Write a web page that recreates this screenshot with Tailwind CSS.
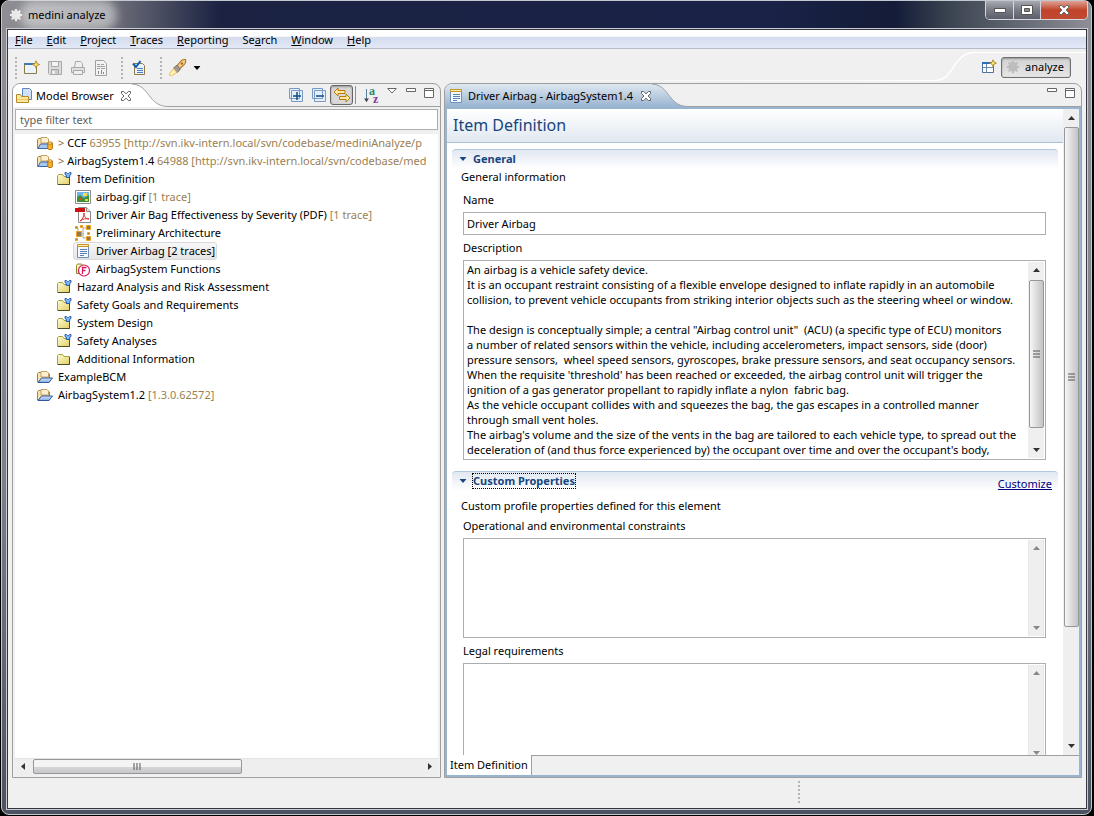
<!DOCTYPE html>
<html lang="en">
  <head>
    <meta charset="UTF-8" />
    <meta name="viewport" content="width=device-width, initial-scale=1.0" />
    <title>medini analyze</title>
    <script src="https://cdn.jsdelivr.net/npm/@tailwindcss/browser@4"></script>
  </head>

  <body
    class="h-screen overflow-hidden bg-black font-['Noto_Sans',sans-serif] text-[11px] leading-4 text-black"
  >
    <!-- shared icons -->
    <svg class="absolute size-0">
      <defs>
        <linearGradient id="yellow" x1="0" y1="0" x2="1" y2="1">
          <stop offset="0" stop-color="#fdfbd0" />
          <stop offset="1" stop-color="#e2cf66" />
        </linearGradient>
        <linearGradient id="blue" x1="0" y1="0" x2="0" y2="1">
          <stop offset="0" stop-color="#d7e8fb" />
          <stop offset="1" stop-color="#7fa9e0" />
        </linearGradient>
        <linearGradient id="tab" x1="0" y1="0" x2="0" y2="1">
          <stop offset="0" stop-color="#dfe8f1" />
          <stop offset="1" stop-color="#99b4d1" />
        </linearGradient>
        <symbol id="gear" viewBox="0 0 16 16">
          <path d="M8 1v14M1 8h14M3 3l10 10M13 3L3 13" stroke="currentColor" stroke-width="2.4" />
          <circle cx="8" cy="8" r="3.9" fill="none" stroke="currentColor" stroke-width="3" />
        </symbol>
        <symbol id="folder" viewBox="0 0 16 16">
          <path d="M1.5 13.5v-9l1-1h4l1.5 2h5.5v8z" fill="url(#yellow)" stroke="#a3a03e" />
          <path d="M2 13.5h11.5V6" fill="none" stroke="#4f4d1c" />
        </symbol>
        <symbol id="folder-model" viewBox="0 0 16 16">
          <path d="M1.5 13.5v-9l1-1h4l1.5 2h5.500v8z" fill="url(#yellow)" stroke="#a3a03e" />
          <path d="M2 13.5h11.5V6" fill="none" stroke="#4f4d1c" />
          <path d="M9 1.500h1.500l1 1h1l1-1H15v2l-1.300.7v2.300h-3.400V4.200L9 3.500z" fill="#7dbcf8" stroke="#1f4ea3" stroke-width=".9" />
        </symbol>
        <symbol id="project" viewBox="0 0 16 16">
          <path d="M.5 13V4.500l1-1h3.500l1 1.500h6.500V13z" fill="#fbe3ad" stroke="#a08348" />
          <path d="M4 2.500h6l1.500 1.500v4H4z" fill="#fdf0d0" stroke="#c3a065" />
          <path d="M1 13.500l3.500-4.500h11l-3.500 4.500z" fill="url(#blue)" stroke="#33579b" />
        </symbol>
        <symbol id="project-svn" viewBox="0 0 16 16">
          <path d="M.5 13.500v-9l1-1h3.500l1 1.500h5.500v8.500z" fill="#fbe3ad" stroke="#a08348" />
          <path d="M4 2.500h6l1.500 1.500v4H4z" fill="#fdf0d0" stroke="#c3a065" />
          <path d="M1 13.500l2.500-4.500h8v4.500z" fill="#a9c8f0" stroke="#3f65a8" />
          <path d="M10.800 8v5.500c0 1.500 4.500 1.500 4.500 0V8z" fill="#f7b530" stroke="#b06a00" />
          <ellipse cx="13" cy="8" rx="2.200" ry="1.200" fill="#ffe9a0" stroke="#b06a00" stroke-width=".8" />
        </symbol>
        <symbol id="form" viewBox="0 0 16 16">
          <path d="M2.500 1.500h11v13h-11z" fill="#f4f9ff" stroke="#6f8fb8" />
          <path d="M2.500 1.500h11v2h-11z" fill="#fdeeb0" stroke="#c9962c" />
          <path d="M5 6.500h7M5 8.500h7M5 10.500h7M5 12.500h4" stroke="#5b80b8" />
        </symbol>
        <symbol id="close-x" viewBox="0 0 12 12">
          <path d="M1.500 1.500h2.200L6 3.900l2.300-2.400h2.200v2L8.100 6l2.400 2.500v2H8.300L6 8.100l-2.300 2.400H1.500v-2L3.900 6 1.500 3.500z" fill="#fff" stroke="#666" />
        </symbol>
        <symbol id="min" viewBox="0 0 12 12">
          <path d="M1.500 1.500h9v3h-9z" fill="#fff" stroke="#666" />
        </symbol>
        <symbol id="max" viewBox="0 0 12 12">
          <path d="M1.500 1.500h9v9h-9z" fill="#fff" stroke="#666" />
          <path d="M1 3.500h10" stroke="#666" />
        </symbol>
        <symbol id="up" viewBox="0 0 7 4"><path d="M0 4l3.500-4L7 4z" /></symbol>
        <symbol id="down" viewBox="0 0 7 4"><path d="M0 0h7L3.500 4z" /></symbol>
      </defs>
    </svg>

    <div
      class="mr-[2px] ml-px flex h-[calc(100vh-1px)] flex-col rounded-lg border border-[#c3c7cf] bg-linear-to-b from-[#8f8f98] via-[#7c7f8a] via-60% to-[#4c5262] pr-[3px] pb-1 pl-1"
    >
      <!-- title bar -->
      <header
        class="-mr-[3px] -ml-1 flex h-[27px] shrink-0 justify-between rounded-t-lg bg-[linear-gradient(90deg,#8e8e94_0%,#77787f_9%,#1b2242_20%,#1a2248_70%,#141c38_82%,#3a4450_87%,#8e8e96_100%)] pr-[3px] pl-[7px]"
      >
        <div class="flex items-center gap-1">
          <svg class="size-[14px] text-[#e8e8e8]"><use href="#gear" /></svg>
          <h1 class="rounded-full bg-white/45 pr-1 pl-px shadow-[0_0_9px_7px_rgba(255,255,255,0.45)]">medini analyze</h1>
        </div>
        <div class="flex h-[19px] overflow-hidden rounded-b-[5px] border border-t-0 border-[#d5d7dc]">
          <button
            aria-label="Minimize"
            class="flex w-7 items-center justify-center border-r border-[#d5d7dc] bg-linear-to-b from-[#a9abb4] via-[#7c7e88] via-45% to-[#5c5f6b]"
          >
            <svg class="h-[5px] w-3"><path d="M.5.5h11v4H.5z" fill="#fff" stroke="#555" /></svg>
          </button>
          <button
            aria-label="Maximize"
            class="flex w-[27px] items-center justify-center border-r border-[#d5d7dc] bg-linear-to-b from-[#a9abb4] via-[#7c7e88] via-45% to-[#5c5f6b]"
          >
            <svg class="h-[10px] w-3">
              <path d="M.5.5h11v9H.5z" fill="#fff" stroke="#555" />
              <path d="M3.500 3.500h5v3h-5z" fill="#888" stroke="#555" />
            </svg>
          </button>
          <button
            aria-label="Close"
            class="flex w-[46px] items-center justify-center bg-linear-to-b from-[#dda295] via-[#c0432a] via-50% to-[#c04a32]"
          >
            <svg class="size-3"><use href="#close-x" /></svg>
          </button>
        </div>
      </header>

      <div class="flex min-h-0 flex-1 border border-[#c9ccd3]">
        <div class="flex min-w-0 flex-1 flex-col border border-[#33363f] bg-[#f0f0f0]">
          <!-- menu bar -->
          <nav
            class="flex h-[19px] shrink-0 items-center border-b border-[#b6bccc] bg-linear-to-b from-white from-35% via-[#d5dcee] via-40% to-[#e2e8f6] pt-px"
          >
            <button class="px-[7px]"><u>F</u>ile</button>
            <button class="px-[7px]"><u>E</u>dit</button>
            <button class="px-[7px]"><u>P</u>roject</button>
            <button class="px-[7px]"><u>T</u>races</button>
            <button class="px-[7px]"><u>R</u>eporting</button>
            <button class="px-[7px]">Se<u>a</u>rch</button>
            <button class="px-[7px]"><u>W</u>indow</button>
            <button class="px-[7px]"><u>H</u>elp</button>
          </nav>

          <!-- toolbar -->
          <div class="flex h-[34px] shrink-0">
            <div class="flex flex-1 flex-col">
              <div class="flex h-[31px] items-center gap-[7px] pt-[6px] pl-[7px]">
                <span class="h-[22px] border-l-2 border-dotted border-[#b4b4b4]"></span>
                <button aria-label="New">
                  <svg class="size-4">
                    <path d="M.5 3.500h12v10H.5z" fill="#eaf4fd" stroke="#8a7a45" />
                    <path d="M.5 3.500h8v1h-8z" fill="#4d87c7" stroke="#3f78b5" />
                    <path d="M12 .8l1 2.700 2.700 1-2.700 1-1 2.700-1-2.700-2.700-1 2.700-1z" fill="#ffe680" stroke="#a87b10" stroke-width=".8" />
                  </svg>
                </button>
                <button aria-label="Save">
                  <svg class="size-4" fill="none" stroke="#a9a9a9">
                    <path d="M1.500 1.500h13v13h-12l-1-1z" fill="#dcdcdc" />
                    <path d="M4.500 1.500h7v5h-7z" fill="#f4f4f4" />
                    <path d="M4.500 9.500h7v5h-7z" fill="#c9c9c9" />
                    <path d="M6.500 11v3" stroke="#fff" stroke-width="2" />
                  </svg>
                </button>
                <button aria-label="Print">
                  <svg class="size-4" fill="#efefef" stroke="#a9a9a9">
                    <path d="M4.500 7.500l1-6h5l2 2v4z" />
                    <path d="M1.500 7.500h13v5h-13z" fill="#dedede" />
                    <path d="M3.500 10.500h9v4h-9z" />
                  </svg>
                </button>
                <button aria-label="Report">
                  <svg class="size-4" fill="none" stroke="#a0a0a0">
                    <path d="M2.500.5h8l3 3v12h-11z" fill="#f3f3f3" />
                    <path d="M4 4.500h3M8 4.500h3M4 6.500h8M4 8.500h3M8 8.500h4" />
                    <path d="M5.500 11v3M8.500 10v4M10.500 12v2" stroke="#8a8a8a" />
                  </svg>
                </button>
                <span class="ml-[5px] h-[22px] border-l-2 border-dotted border-[#b4b4b4]"></span>
                <button aria-label="Validate" class="ml-px">
                  <svg class="size-4" fill="none">
                    <path d="M3.500 3.500h8l2 2v9h-10z" fill="#eaf2fc" stroke="#8e7a48" />
                    <path d="M6 8.500h6M6 10.500h6M6 12.500h6" stroke="#4f7fbe" />
                    <path d="M2 3.500L5 7l4.500-6" stroke="#0a5cb8" stroke-width="2" />
                  </svg>
                </button>
                <span class="ml-[6px] h-[22px] border-l-2 border-dotted border-[#b4b4b4]"></span>
                <button aria-label="Launch" class="flex items-center gap-[6px]">
                  <svg class="size-[18px]" viewBox="0 0 16 16">
                    <path d="M7 6l4-4.500c1-1 4-1.500 4-.5s-.5 3-1.500 4L9 9z" fill="#f6c878" stroke="#a87224" stroke-width=".9" />
                    <path d="M4 8l3-2.500 3 3.500-2.500 3-2-.5z" fill="#a39a94" stroke="#6e6661" stroke-width=".8" />
                    <path d="M4 8.500L.5 13v1.500L2 15l5-3z" fill="#fff3b8" stroke="#e5b94c" stroke-width=".8" />
                    <circle cx="11.500" cy="4" r="1" fill="#8c6a38" />
                  </svg>
                  <svg class="h-1 w-2" viewBox="0 0 7 4"><use href="#down" /></svg>
                </button>
              </div>
              <div class="h-px bg-linear-to-r from-transparent from-40% to-white"></div>
            </div>
            <svg class="h-[34px] w-10 shrink-0" fill="none">
              <path d="M0 31.500C20 31.500 17 3.500 40 3.500" stroke="#fff" stroke-width="1.500" />
            </svg>
            <div class="mt-[3px] flex w-[111px] shrink-0 items-center gap-1 border-t border-white pb-[2px] pl-[6px]">
              <button aria-label="Open Perspective">
                <svg class="size-4" fill="none">
                  <path d="M1.500 3.500h11v10h-11z" fill="#fff" stroke="#4f6f9d" />
                  <path d="M1 4h8" stroke="#2e70b8" stroke-width="2" />
                  <path d="M5.500 5v9M1.500 8.500h11" stroke="#6d89ad" />
                  <path d="M12 .8l1 2.400 2.400 1-2.400 1-1 2.400-1-2.400-2.400-1 2.400-1z" fill="#ffe680" stroke="#a87b10" stroke-width=".8" />
                </svg>
              </button>
              <button
                class="flex h-[21px] w-[70px] items-center gap-[5px] rounded-[3px] border border-[#6f6f6f] bg-linear-to-b from-[#d2d2d2] to-[#e6e6e6] pl-1 shadow-[inset_0_1px_2px_rgba(0,0,0,0.3)]"
              >
                <svg class="size-[14px] text-[#bdbdbd]"><use href="#gear" /></svg>
                analyze
              </button>
            </div>
          </div>

          <!-- workbench -->
          <main class="grid min-h-0 flex-1 grid-cols-[429fr_638fr] gap-[3px] px-1">
            <!-- model browser -->
            <section class="flex min-w-0 flex-col overflow-hidden rounded-t-lg border border-[#9f9f9f]">
              <div class="flex h-[23px] shrink-0">
                <div class="flex items-center gap-1 bg-white pl-[3px]">
                  <svg class="size-4" fill="none">
                    <path d="M6.500.5h7l2 2v9h-9z" fill="#cfe0f7" stroke="#5f86bf" />
                    <path d="M.5 14.500v-8h4l1 2h7v6z" fill="#fbe6a0" stroke="#b98a2a" />
                    <path d="M1 11.500h11" stroke="#f0c860" />
                  </svg>
                  <h2>Model Browser</h2>
                  <button aria-label="Close Model Browser" class="ml-[2px]">
                    <svg class="size-3"><use href="#close-x" /></svg>
                  </button>
                </div>
                <svg class="h-[23px] w-9 shrink-0">
                  <path d="M0 0C18 1 16 22.500 36 22.500V23H0z" fill="#fff" />
                  <path d="M0 0C18 1 16 22.500 36 22.500" fill="none" stroke="#9f9f9f" />
                </svg>
                <div class="flex flex-1 items-center justify-end border-b border-[#9f9f9f] pr-[5px]">
                  <button aria-label="Expand All" class="mr-[7px]">
                    <svg class="size-4" fill="#e2f0fb" stroke="#7b99c0">
                      <path d="M1.500 1.500h10v10h-10zM3.500 3.500h11v11h-11z" />
                      <path d="M5 9h8M9 5v8" stroke="#0f4a85" stroke-width="1.500" />
                    </svg>
                  </button>
                  <button aria-label="Collapse All" class="mr-[3px]">
                    <svg class="size-4" fill="#e2f0fb" stroke="#7b99c0">
                      <path d="M1.500 1.500h10v10h-10zM3.500 3.500h11v11h-11z" />
                      <path d="M5 9h8" stroke="#0f4a85" stroke-width="1.500" />
                    </svg>
                  </button>
                  <button
                    aria-label="Link with Editor"
                    class="flex h-5 w-[23px] items-center justify-center rounded-[3px] border border-[#666] bg-[#d8d8d8] shadow-[inset_0_1px_2px_rgba(0,0,0,0.3)]"
                  >
                    <svg class="h-4 w-[18px]" viewBox="0 0 18 16" fill="#ffe9a0" stroke="#b97a08">
                      <path d="M1 5l4-4v2.500h7v3H5V9z" />
                      <path d="M17 11l-4-4v2.500H6.500v3H13V15z" />
                    </svg>
                  </button>
                  <span class="mr-[7px] ml-[2px] h-[18px] border-l border-[#8f8f8f]"></span>
                  <button aria-label="Sort" class="mr-[7px]">
                    <svg class="h-[18px] w-[17px]">
                      <path d="M3.500 3v13" stroke="#5580a0" />
                      <path d="M1 12.500h5L3.500 16z" fill="#444" />
                      <text x="6" y="9" class="font-['Liberation_Serif',serif] text-[12px] font-bold" fill="#1e8a72">a</text>
                      <text x="10" y="17" class="font-['Liberation_Serif',serif] text-[12px] font-bold" fill="#8a3a98">z</text>
                    </svg>
                  </button>
                  <button aria-label="View Menu" class="mr-2 mb-2">
                    <svg class="h-[6px] w-[10px]"><path d="M.7.5h8.600L5 5z" fill="#fff" stroke="#666" /></svg>
                  </button>
                  <button aria-label="Minimize view" class="mr-[6px] mb-1">
                    <svg class="size-3"><use href="#min" /></svg>
                  </button>
                  <button aria-label="Maximize view" class="mb-1">
                    <svg class="size-3"><use href="#max" /></svg>
                  </button>
                </div>
              </div>

              <div class="flex min-h-0 flex-1 flex-col p-[2px]">
                <input
                  type="text"
                  aria-label="Filter"
                  placeholder="type filter text"
                  class="mb-1 h-[21px] w-full shrink-0 border border-[#abadb3] bg-white px-1 placeholder:text-[#5f5f5f]"
                />
                <ul role="tree" class="min-h-0 flex-1 overflow-hidden bg-white whitespace-nowrap text-black">
                  <li class="flex h-[18px] items-center gap-[5px] pl-[22px]">
                    <svg class="size-4 shrink-0"><use href="#project-svn" /></svg>
                    <span><span class="text-[#8a6d3b]">&gt;</span> CCF <span class="text-[#9a8052]">63955 [http://svn.ikv-intern.local/svn/codebase/mediniAnalyze/p</span></span>
                  </li>
                  <li class="flex h-[18px] items-center gap-[5px] pl-[22px]">
                    <svg class="size-4 shrink-0"><use href="#project-svn" /></svg>
                    <span><span class="text-[#8a6d3b]">&gt;</span> AirbagSystem1.4 <span class="text-[#9a8052]">64988 [http://svn.ikv-intern.local/svn/codebase/med</span></span>
                  </li>
                  <li class="flex h-[18px] items-center gap-[5px] pl-[41px]">
                    <svg class="size-4"><use href="#folder-model" /></svg>
                    Item Definition
                  </li>
                  <li class="flex h-[18px] items-center gap-[5px] pl-[60px]">
                    <svg class="size-4">
                      <path d="M.5 1.500h15v13H.5z" fill="#fff" stroke="#8c8c8c" />
                      <path d="M2 3h12v10H2z" fill="#6fb4ee" />
                      <path d="M2 13V8l3-2 4 3 5-3v7z" fill="#3f8f35" />
                      <path d="M8 4h4v3H8z" fill="#f4e04a" />
                      <path d="M4 9h3v2H4z" fill="#e0472c" />
                      <path d="M10 10h3v2h-3z" fill="#f0d020" />
                    </svg>
                    <span>airbag.gif <span class="text-[#9a8052]">[1 trace]</span></span>
                  </li>
                  <li class="flex h-[18px] items-center gap-[5px] pl-[60px]">
                    <svg class="size-4">
                      <path d="M3.500.5h8l4 4v11h-12z" fill="#fff" stroke="#8a8a8a" />
                      <path d="M11.500.5v4h4" fill="#ddd" stroke="#8a8a8a" />
                      <path d="M0 1h10v4H0z" fill="#cf1010" />
                      <path d="M5 14c2-1 4-4 4-8 0 4 2 6 5 6-3-1-6 0-9 2z" fill="none" stroke="#dc2a2a" />
                    </svg>
                    <span>Driver Air Bag Effectiveness by Severity (PDF) <span class="text-[#9a8052]">[1 trace]</span></span>
                  </li>
                  <li class="flex h-[18px] items-center gap-[5px] pl-[60px]">
                    <svg class="size-4">
                      <path d="M3 3v5M8 8V3h4M8 8v5h4M6 9h3" fill="none" stroke="#a8a8a8" />
                      <path d="M.5 1.500h2v2h-2zM5.500.5h2v2h-2zM11.500.5h4v4h-4zM1.500 6.500h5v5h-5zM12.500 7.500h2v2h-2zM11.500 11.500h4v4h-4zM.5 13.500h2v2h-2z" fill="#8a7a5a" stroke="#f2a21a" />
                    </svg>
                    Preliminary Architecture
                  </li>
                  <li class="flex h-[18px] pl-[58px]" aria-selected="true">
                    <span
                      class="flex items-center gap-[5px] rounded-[3px] border border-[#d9d9d9] bg-linear-to-b from-[#f8f8f8] to-[#e5e5e5] px-px"
                    >
                      <svg class="size-4"><use href="#form" /></svg>
                      Driver Airbag [2 traces]
                    </span>
                  </li>
                  <li class="flex h-[18px] items-center gap-[5px] pl-[60px]">
                    <svg class="size-4">
                      <path d="M1.500 12.500v-8l1-1.500h4l1.500 1.500h3v8z" fill="url(#yellow)" stroke="#8a8a2c" />
                      <circle cx="9" cy="9.500" r="5.500" fill="#fff" stroke="#d81b60" stroke-width="1.200" />
                      <path d="M7.500 13V6.500h4M7.500 9.500h3" fill="none" stroke="#d81b60" stroke-width="1.300" />
                    </svg>
                    AirbagSystem Functions
                  </li>
                  <li class="flex h-[18px] items-center gap-[5px] pl-[41px]">
                    <svg class="size-4"><use href="#folder-model" /></svg>
                    Hazard Analysis and Risk Assessment
                  </li>
                  <li class="flex h-[18px] items-center gap-[5px] pl-[41px]">
                    <svg class="size-4"><use href="#folder-model" /></svg>
                    Safety Goals and Requirements
                  </li>
                  <li class="flex h-[18px] items-center gap-[5px] pl-[41px]">
                    <svg class="size-4"><use href="#folder-model" /></svg>
                    System Design
                  </li>
                  <li class="flex h-[18px] items-center gap-[5px] pl-[41px]">
                    <svg class="size-4"><use href="#folder-model" /></svg>
                    Safety Analyses
                  </li>
                  <li class="flex h-[18px] items-center gap-[5px] pl-[41px]">
                    <svg class="size-4"><use href="#folder" /></svg>
                    Additional Information
                  </li>
                  <li class="flex h-[18px] items-center gap-[5px] pl-[22px]">
                    <svg class="size-4"><use href="#project" /></svg>
                    ExampleBCM
                  </li>
                  <li class="flex h-[18px] items-center gap-[5px] pl-[22px]">
                    <svg class="size-4"><use href="#project" /></svg>
                    <span>AirbagSystem1.2 <span class="text-[#9a8052]">[1.3.0.62572]</span></span>
                  </li>
                </ul>
                <div class="flex h-[17px] shrink-0 items-center justify-between border-t border-[#e3e3e3] bg-[#eeeeee] px-[6px] pb-px">
                  <svg class="h-[7px] w-1"><path d="M4 0v7L0 3.500z" fill="#333" /></svg>
                  <div class="mx-2 flex flex-1">
                    <div
                      class="flex h-[15px] w-[54%] items-center justify-center rounded-[2px] border border-[#979797] bg-linear-to-b from-[#f4f4f4] from-50% via-[#d6d6d8] via-55% to-[#c6c6ca]"
                    >
                      <svg class="h-[7px] w-2"><path d="M1 0v7M4 0v7M7 0v7" stroke="#555" /></svg>
                    </div>
                  </div>
                  <svg class="h-[7px] w-1"><path d="M0 0v7l4-3.500z" fill="#333" /></svg>
                </div>
              </div>
            </section>

            <!-- editor -->
            <section class="flex min-w-0 flex-col overflow-hidden rounded-t-lg border border-[#9f9f9f]">
              <div class="flex h-[23px] shrink-0">
                <div class="flex items-center gap-1 bg-linear-to-b from-[#dfe8f1] to-[#99b4d1] pl-[3px]">
                  <svg class="size-4"><use href="#form" /></svg>
                  <h2>Driver Airbag - AirbagSystem1.4</h2>
                  <button aria-label="Close editor" class="ml-[3px]">
                    <svg class="size-3"><use href="#close-x" /></svg>
                  </button>
                </div>
                <svg class="h-[23px] w-9 shrink-0">
                  <path d="M0 0C18 1 16 22.500 36 22.500V23H0z" fill="url(#tab)" />
                  <path d="M0 0C18 1 16 22.500 36 22.500" fill="none" stroke="#9f9f9f" />
                </svg>
                <div class="flex flex-1 items-center justify-end gap-[6px] border-b border-[#9f9f9f] pr-[5px] pb-1">
                  <button aria-label="Minimize editor"><svg class="size-3"><use href="#min" /></svg></button>
                  <button aria-label="Maximize editor"><svg class="size-3"><use href="#max" /></svg></button>
                </div>
              </div>

              <div class="flex min-h-0 flex-1 flex-col border-2 border-[#99b4d1]">
                <div class="flex min-h-0 flex-1">
                  <div class="min-w-0 flex-1 overflow-hidden bg-white">
                    <h2
                      class="h-[34px] border-b border-[#a9c1dc] bg-linear-to-b from-white to-[#e1e8f1] pl-[6px] text-[16px] leading-8 text-[#17457d]"
                    >
                      Item Definition
                    </h2>

                    <div class="px-[5px] pt-[6px]">
                      <h3
                        class="flex h-5 items-center gap-[6px] rounded-t-[4px] border-t border-[#b3c8e0] bg-linear-to-b from-[#e1e8f2] to-white pb-[2px] pl-[7px] font-bold text-[#17457d]"
                      >
                        <svg class="h-1 w-2" viewBox="0 0 7 4" fill="#17457d"><use href="#down" /></svg>
                        General
                      </h3>
                      <p class="pl-[9px]">General information</p>
                      <div class="flex flex-col pr-3 pl-[11px]">
                        <label for="name" class="mt-[7px]">Name</label>
                        <input
                          id="name"
                          type="text"
                          value="Driver Airbag"
                          class="mt-1 h-[23px] border border-[#abadb3] bg-white px-[3px]"
                        />
                        <label for="description" class="mt-[5px]">Description</label>
                        <div class="mt-1 flex h-[200px] border border-[#abadb3] p-px">
                          <textarea
                            id="description"
                            wrap="off"
                            class="min-w-0 flex-1 resize-none overflow-hidden pl-[2px] leading-[15px] whitespace-pre"
                          >
An airbag is a vehicle safety device.
It is an occupant restraint consisting of a flexible envelope designed to inflate rapidly in an automobile
collision, to prevent vehicle occupants from striking interior objects such as the steering wheel or window.

The design is conceptually simple; a central "Airbag control unit"  (ACU) (a specific type of ECU) monitors
a number of related sensors within the vehicle, including accelerometers, impact sensors, side (door)
pressure sensors,  wheel speed sensors, gyroscopes, brake pressure sensors, and seat occupancy sensors.
When the requisite 'threshold' has been reached or exceeded, the airbag control unit will trigger the
ignition of a gas generator propellant to rapidly inflate a nylon  fabric bag.
As the vehicle occupant collides with and squeezes the bag, the gas escapes in a controlled manner
through small vent holes.
The airbag's volume and the size of the vents in the bag are tailored to each vehicle type, to spread out the
deceleration of (and thus force experienced by) the occupant over time and over the occupant's body,</textarea>
                          <div class="flex w-4 shrink-0 flex-col items-center justify-between bg-[#efefef] py-[6px]">
                            <svg class="h-1 w-[7px]" fill="#333"><use href="#up" /></svg>
                            <div class="my-2 flex w-[15px] flex-1">
                              <div
                                class="mb-3 flex flex-1 items-center justify-center rounded-[2px] border border-[#979797] bg-linear-to-r from-[#f6f6f6] via-[#dcdcde] to-[#c4c4c8]"
                              >
                                <svg class="h-2 w-[7px]"><path d="M0 1h7M0 4h7M0 7h7" stroke="#555" /></svg>
                              </div>
                            </div>
                            <svg class="h-1 w-[7px]" fill="#333"><use href="#down" /></svg>
                          </div>
                        </div>
                      </div>

                      <div
                        class="mt-[11px] flex h-5 items-center justify-between rounded-t-[4px] border-t border-[#b3c8e0] bg-linear-to-b from-[#e1e8f2] to-white pr-[6px] pl-[7px]"
                      >
                        <h3 class="flex items-center gap-[5px] pb-[2px] font-bold text-[#17457d]">
                          <svg class="h-1 w-2" viewBox="0 0 7 4" fill="#17457d"><use href="#down" /></svg>
                          <span class="border border-dotted border-black leading-[14px]">Custom Properties</span>
                        </h3>
                        <a href="#" class="pt-1 text-[#00007f] underline">Customize</a>
                      </div>
                      <p class="mt-[7px] pl-[9px]">Custom profile properties defined for this element</p>
                      <div class="flex flex-col pr-3 pl-[11px]">
                        <label for="constraints" class="mt-1">Operational and environmental constraints</label>
                        <div class="mt-1 flex h-[100px] border border-[#abadb3] p-px">
                          <textarea id="constraints" class="min-w-0 flex-1 resize-none overflow-hidden pl-[2px] leading-[15px]"></textarea>
                          <div class="flex w-4 shrink-0 flex-col items-center justify-between border-x border-[#e6e6e6] bg-[#efefef] py-[6px]">
                            <svg class="h-1 w-[7px]" fill="#888"><use href="#up" /></svg>
                            <svg class="h-1 w-[7px]" fill="#888"><use href="#down" /></svg>
                          </div>
                        </div>
                        <label for="legal" class="mt-[5px]">Legal requirements</label>
                        <div class="mt-1 flex h-[100px] border border-[#abadb3] p-px">
                          <textarea id="legal" class="min-w-0 flex-1 resize-none overflow-hidden pl-[2px] leading-[15px]"></textarea>
                          <div class="flex w-4 shrink-0 flex-col items-center justify-between border-x border-[#e6e6e6] bg-[#efefef] py-[6px]">
                            <svg class="h-1 w-[7px]" fill="#888"><use href="#up" /></svg>
                            <svg class="h-1 w-[7px]" fill="#888"><use href="#down" /></svg>
                          </div>
                        </div>
                      </div>
                    </div>
                  </div>

                  <!-- form scrollbar -->
                  <div class="flex w-4 shrink-0 flex-col items-center bg-[#efefef] py-[7px]">
                    <svg class="h-1 w-[7px]" fill="#333"><use href="#up" /></svg>
                    <div class="my-[7px] flex w-[15px] flex-1 flex-col">
                      <div
                        class="flex h-[82%] items-center justify-center rounded-[2px] border border-[#979797] bg-linear-to-r from-[#f6f6f6] via-[#dcdcde] to-[#c4c4c8]"
                      >
                        <svg class="h-2 w-[7px]"><path d="M0 1h7M0 4h7M0 7h7" stroke="#555" /></svg>
                      </div>
                    </div>
                    <svg class="h-1 w-[7px]" fill="#333"><use href="#down" /></svg>
                  </div>
                </div>

                <!-- page tabs -->
                <div class="flex h-5 shrink-0">
                  <button class="border-r border-[#9f9f9f] bg-white px-[3px]">Item Definition</button>
                  <div class="flex-1 border-t border-[#9f9f9f]"></div>
                </div>
              </div>
            </section>
          </main>

          <!-- status bar -->
          <footer class="flex h-[30px] shrink-0 items-start justify-end pt-[3px] pr-[286px]">
            <span class="h-[22px] border-l-2 border-dotted border-[#b4b4b4]"></span>
          </footer>
        </div>
      </div>
    </div>
  </body>
</html>
